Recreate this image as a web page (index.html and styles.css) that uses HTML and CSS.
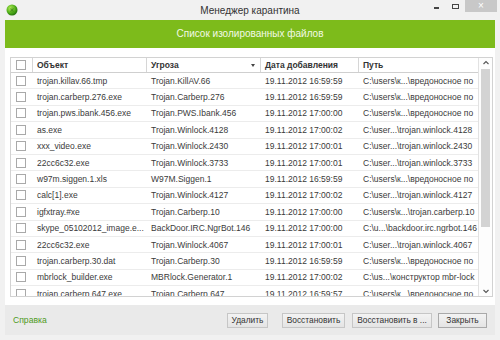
FILE: index.html
```html
<!DOCTYPE html>
<html lang="ru">
<head>
<meta charset="utf-8">
<title>Менеджер карантина</title>
<link rel="stylesheet" href="styles.css">
</head>
<body>
<div class="window">
  <div class="titlebar">
    <div class="tb-left">
      <svg class="logo" width="12" height="12" viewBox="0 0 12 12">
        <defs>
          <radialGradient id="g" cx="0.38" cy="0.35" r="0.7">
            <stop offset="0" stop-color="#b8ef5a"/>
            <stop offset="0.6" stop-color="#4fae18"/>
            <stop offset="1" stop-color="#1f6a0c"/>
          </radialGradient>
        </defs>
        <circle cx="6" cy="6" r="5.5" fill="url(#g)"/>
        <path d="M4 4.5 L8 7.5 M8 4.5 L4 7.5 M6 3.5 V8.5" stroke="#2a6e10" stroke-width="0.8" opacity="0.7"/>
      </svg>
    </div>
    <div class="title">Менеджер карантина</div>
    <div class="controls">
      <span class="ctl-min"></span>
      <span class="ctl-max"></span>
      <span class="ctl-close">×</span>
    </div>
  </div>
  <div class="banner">Список изолированных файлов</div>
  <div class="panel">
    <div class="table">
      <div class="list">
        <div class="row head">
          <div class="c chk"><span class="box"></span></div>
          <div class="c">Объект</div>
          <div class="c sort">Угроза<span class="tri"></span></div>
          <div class="c">Дата добавления</div>
          <div class="c last">Путь</div>
        </div>
        <div class="row"><div class="c chk"><span class="box"></span></div><div class="c">trojan.killav.66.tmp</div><div class="c">Trojan.KillAV.66</div><div class="c">19.11.2012 16:59:59</div><div class="c">C:\users\к...\вредоносное по</div></div>
        <div class="row"><div class="c chk"><span class="box"></span></div><div class="c">trojan.carberp.276.exe</div><div class="c">Trojan.Carberp.276</div><div class="c">19.11.2012 16:59:59</div><div class="c">C:\users\к...\вредоносное по</div></div>
        <div class="row"><div class="c chk"><span class="box"></span></div><div class="c">trojan.pws.ibank.456.exe</div><div class="c">Trojan.PWS.Ibank.456</div><div class="c">19.11.2012 17:00:00</div><div class="c">C:\users\к...\вредоносное по</div></div>
        <div class="row"><div class="c chk"><span class="box"></span></div><div class="c">as.exe</div><div class="c">Trojan.Winlock.4128</div><div class="c">19.11.2012 17:00:02</div><div class="c">C:\user...\trojan.winlock.4128</div></div>
        <div class="row"><div class="c chk"><span class="box"></span></div><div class="c">xxx_video.exe</div><div class="c">Trojan.Winlock.2430</div><div class="c">19.11.2012 17:00:01</div><div class="c">C:\user...\trojan.winlock.2430</div></div>
        <div class="row"><div class="c chk"><span class="box"></span></div><div class="c">22cc6c32.exe</div><div class="c">Trojan.Winlock.3733</div><div class="c">19.11.2012 17:00:01</div><div class="c">C:\user...\trojan.winlock.3733</div></div>
        <div class="row"><div class="c chk"><span class="box"></span></div><div class="c">w97m.siggen.1.xls</div><div class="c">W97M.Siggen.1</div><div class="c">19.11.2012 16:59:59</div><div class="c">C:\users\к...\вредоносное по</div></div>
        <div class="row"><div class="c chk"><span class="box"></span></div><div class="c">calc[1].exe</div><div class="c">Trojan.Winlock.4127</div><div class="c">19.11.2012 17:00:02</div><div class="c">C:\user...\trojan.winlock.4127</div></div>
        <div class="row"><div class="c chk"><span class="box"></span></div><div class="c">igfxtray.#xe</div><div class="c">Trojan.Carberp.10</div><div class="c">19.11.2012 17:00:00</div><div class="c">C:\users\к...\trojan.carberp.10</div></div>
        <div class="row"><div class="c chk"><span class="box"></span></div><div class="c">skype_05102012_image.e...</div><div class="c">BackDoor.IRC.NgrBot.146</div><div class="c">19.11.2012 17:00:00</div><div class="c">C:\u...\backdoor.irc.ngrbot.146</div></div>
        <div class="row"><div class="c chk"><span class="box"></span></div><div class="c">22cc6c32.exe</div><div class="c">Trojan.Winlock.4067</div><div class="c">19.11.2012 17:00:01</div><div class="c">C:\user...\trojan.winlock.4067</div></div>
        <div class="row"><div class="c chk"><span class="box"></span></div><div class="c">trojan.carberp.30.dat</div><div class="c">Trojan.Carberp.30</div><div class="c">19.11.2012 16:59:59</div><div class="c">C:\users\к...\вредоносное по</div></div>
        <div class="row"><div class="c chk"><span class="box"></span></div><div class="c">mbrlock_builder.exe</div><div class="c">MBRlock.Generator.1</div><div class="c">19.11.2012 17:00:02</div><div class="c">C:\us...\конструктор mbr-lock</div></div>
        <div class="row"><div class="c chk"><span class="box"></span></div><div class="c">trojan.carberp.647.exe</div><div class="c">Trojan.Carberp.647</div><div class="c">19.11.2012 16:59:57</div><div class="c">C:\users\к...\вредоносное по</div></div>
      </div>
      <div class="scroll">
        <svg class="arr" width="14" height="10" viewBox="0 0 14 10"><polyline points="4.5,6 7,3.5 9.5,6" fill="none" stroke="#555" stroke-width="1.1"/></svg>
        <div class="thumb"></div>
        <div class="spacer"></div>
        <svg class="arr" width="14" height="10" viewBox="0 0 14 10"><polyline points="4.5,4 7,6.5 9.5,4" fill="none" stroke="#555" stroke-width="1.1"/></svg>
      </div>
    </div>
  </div>
  <div class="footer">
    <a class="help" href="#">Справка</a>
    <div class="buttons">
      <button class="btn b-del">Удалить</button>
      <button class="btn b-rest">Восстановить</button>
      <button class="btn b-restto">Восстановить в ...</button>
      <button class="btn b-close">Закрыть</button>
    </div>
  </div>
</div>
</body>
</html>
```

FILE: styles.css
```css
* { box-sizing: border-box; }
html, body {
  margin: 0;
  padding: 0;
  background: #f1f1f1;
  font-family: "Liberation Sans", Arial, sans-serif;
  color: #333;
}
.window {
  width: 500px;
  height: 340px;
  background: #f1f1f1;
  display: flex;
  flex-direction: column;
}
.titlebar {
  height: 20px;
  display: grid;
  grid-template-columns: 1fr auto 1fr;
  align-items: center;
}
.tb-left {
  display: flex;
  align-items: center;
  padding-left: 6px;
}
.logo { display: block; }
.title {
  font-size: 10px;
  color: #333;
}
.controls {
  display: flex;
  justify-content: flex-end;
  align-self: start;
  align-items: flex-start;
  padding-right: 3px;
}
.ctl-min {
  width: 5px;
  height: 1.5px;
  background: #444;
  margin-top: 7px;
  margin-right: 13px;
}
.ctl-max {
  width: 7px;
  height: 5px;
  border: 1px solid #444;
  border-top-width: 1.5px;
  margin-top: 4px;
  margin-right: 6px;
}
.ctl-close {
  width: 32px;
  height: 12px;
  background: #c8c8c8;
  color: #fff;
  font-size: 10px;
  line-height: 12px;
  text-align: center;
}
.banner {
  margin: 0 5px;
  height: 28px;
  background: #7dbb1b;
  color: #f2f9e6;
  font-size: 10px;
  line-height: 28px;
  text-align: center;
}
.panel {
  margin: 0 5px;
  height: 257px;
  background: #fff;
  padding: 9px 2px 8px 5px;
}
.table {
  height: 240px;
  border: 1px solid #d2d2d2;
  display: flex;
  overflow: hidden;
}
.list {
  width: 467px;
  overflow: hidden;
}
.row {
  display: grid;
  grid-template-columns: 22px 114px 114px 98px 119px;
  height: 16.4px;
  border-bottom: 1px solid #ececec;
  font-size: 8.5px;
  align-items: center;
}
.row .c {
  padding-left: 4px;
  white-space: nowrap;
  overflow: hidden;
  color: #3a3a3a;
}
.row .chk {
  padding-left: 5px;
  display: flex;
  align-items: center;
}
.box {
  width: 10px;
  height: 10px;
  border: 1px solid #a9a9a9;
  background: #fff;
  display: block;
}
.head {
  height: 15px;
  border-bottom: 1px solid #cfcfcf;
  align-items: stretch;
}
.head .c {
  font-weight: bold;
  color: #333;
  border-right: 1px solid #d6d6d6;
  display: flex;
  align-items: center;
}
.head .c.last { border-right: none; }
.head .chk { padding-left: 5px; }
.sort { position: relative; }
.tri {
  position: absolute;
  right: 5px;
  top: 6px;
  width: 0;
  height: 0;
  border-left: 2.5px solid transparent;
  border-right: 2.5px solid transparent;
  border-top: 3px solid #444;
}
.scroll {
  width: 14px;
  border-left: 1px solid #e2e2e2;
  display: flex;
  flex-direction: column;
  align-items: center;
  background: #fdfdfd;
}
.arr { display: block; }
.thumb {
  width: 9px;
  height: 158px;
  background: #d3d3d3;
  margin-top: 1px;
}
.spacer { flex: 1; }
.footer {
  margin: 0 5px;
  height: 30px;
  background: #eaeaea;
  display: flex;
  align-items: center;
  justify-content: space-between;
  padding: 0 8px;
}
.help {
  color: #4e9a1c;
  font-size: 8.6px;
  text-decoration: none;
}
.buttons {
  display: flex;
  align-items: center;
}
.btn {
  height: 15px;
  font-family: "Liberation Sans", Arial, sans-serif;
  font-size: 8.4px;
  color: #333;
  background: linear-gradient(#f3f3f3, #e4e4e4);
  border: 1px solid #c6c6c6;
  padding: 0;
  margin: 0;
  text-align: center;
}
.b-del { width: 41px; }
.b-rest { width: 63px; margin-left: 14px; }
.b-restto { width: 80px; margin-left: 7px; }
.b-close { width: 49px; margin-left: 6px; border-color: #a9a9a9; }
```
